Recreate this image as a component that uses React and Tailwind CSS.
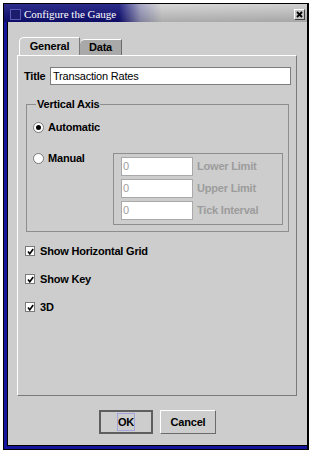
import React from 'react';

const Radio = ({ checked }) => (
  <span className="flex h-[11px] w-[11px] shrink-0 items-center justify-center rounded-full border border-[#7a7a7a] bg-white">
    {checked && <span className="h-[5px] w-[5px] rounded-full bg-black" />}
  </span>
);

const CheckBox = () => (
  <span className="flex h-[10px] w-[10px] shrink-0 items-center justify-center border border-[#7a7a7a] bg-white">
    <svg width="7" height="7" viewBox="0 0 7 7">
      <path d="M1 3.5 L2.8 5.8 L6.2 1" stroke="black" strokeWidth="1.6" fill="none" />
    </svg>
  </span>
);

const LimitRow = ({ label }) => (
  <div className="flex items-center gap-[4px]">
    <div className="flex h-[19px] w-[72px] items-center border border-[#a9a9a9] bg-white pl-[1px] text-[11px] text-[#a0a0a0]">
      0
    </div>
    <span className="text-[11px] font-bold text-[#9c9c9c]">{label}</span>
  </div>
);

const App = () => {
  return (
    <div className="min-h-screen w-full bg-white pl-[3px] pt-[3px] font-['Liberation_Sans',Arial,sans-serif] tracking-[-0.2px]">
      <div className="flex h-[447px] w-[306px] flex-col border border-r-2 border-black">
        {/* Title bar */}
        <div className="flex h-[18px] shrink-0 items-center bg-[linear-gradient(to_bottom,rgba(255,255,255,0.12),rgba(0,0,0,0.18)),linear-gradient(to_right,#10107c_0%,#10107c_38%,#9c9cc0_45%,#d2d2d2_52%,#cacaca_100%)] pl-[6px] pr-[2px] pt-[3px]">
          <span className="h-[11px] w-[11px] border border-[#5a5ab4] bg-[#1c1c6c]" />
          <span className="ml-[3px] font-['Liberation_Serif',serif] text-[11px] leading-none tracking-normal text-white">
            Configure the Gauge
          </span>
          <span className="ml-auto flex h-[11px] w-[11px] items-center justify-center border border-t-white border-l-white border-r-[#404040] border-b-[#404040] bg-[#c4c4c4]">
            <svg width="7" height="7" viewBox="0 0 7 7">
              <path d="M1 1 L6 6 M6 1 L1 6" stroke="black" strokeWidth="1.8" />
            </svg>
          </span>
        </div>

        {/* Body */}
        <div className="flex flex-1 flex-col border-b-[3px] border-l-[3px] border-[#14149c]">
          <div className="flex flex-1 flex-col border-b border-l border-black bg-[#cdcdcd] pl-[9px] pr-[9px] pt-[15px]">
            {/* Tabs */}
            <div className="flex h-[18px] items-end">
              <div className="ml-[2px] flex h-[18px] w-[61px] items-center justify-center rounded-tl-[5px] border-l border-t border-r border-l-white border-t-white border-r-[#7a7a7a] text-[11px] font-bold text-black">
                General
              </div>
              <div className="flex h-[16px] w-[42px] items-center justify-center rounded-tl-[5px] border-t border-r border-t-white border-r-[#6a6a6a] bg-[#a9a9a9] text-[11px] font-bold text-black">
                Data
              </div>
            </div>

            {/* Panel */}
            <div className="flex h-[341px] w-[280px] flex-col border border-l-white border-t-white border-r-[#7a7a7a] border-b-[#7a7a7a] pl-[6px] pr-[5px] pt-[11px]">
              {/* Title */}
              <div className="flex h-[18px] items-center">
                <span className="w-[26px] text-[11px] font-bold text-black">Title</span>
                <div className="flex h-[18px] flex-1 items-center border border-[#7c7c7c] bg-white pl-[2px] text-[11px] text-black">
                  Transaction Rates
                </div>
              </div>

              {/* Vertical Axis */}
              <fieldset className="mx-[2px] mt-[13px] border border-[#8e8e8e] pb-[6px] pl-[6px] pr-[5px]">
                <legend className="ml-[3px] px-[1px] text-[11px] font-bold leading-[13px] text-black">
                  Vertical Axis
                </legend>
                <div className="mt-[9px] flex h-[14px] items-center gap-[4px]">
                  <Radio checked />
                  <span className="text-[11px] font-bold text-black">Automatic</span>
                </div>
                <div className="mt-[17px] flex items-start">
                  <div className="flex h-[14px] items-center gap-[4px]">
                    <Radio />
                    <span className="text-[11px] font-bold text-black">Manual</span>
                  </div>
                  <div className="ml-auto mt-[2px] flex w-[170px] flex-col gap-[3px] border border-[#8e8e8e] pb-[4px] pl-[7px] pt-[3px]">
                    <LimitRow label="Lower Limit" />
                    <LimitRow label="Upper Limit" />
                    <LimitRow label="Tick Interval" />
                  </div>
                </div>
              </fieldset>

              {/* Options */}
              <div className="ml-[1px] mt-[12px] flex flex-col gap-[14px]">
                {['Show Horizontal Grid', 'Show Key', '3D'].map((label) => (
                  <div key={label} className="flex h-[14px] items-center gap-[5px]">
                    <CheckBox />
                    <span className="text-[11px] font-bold text-black">{label}</span>
                  </div>
                ))}
              </div>
            </div>

            {/* Buttons */}
            <div className="mt-[14px] flex justify-center gap-[7px]">
              <button className="flex h-[24px] w-[54px] items-center justify-center border-2 border-[#5e5e5e] bg-[#cdcdcd]">
                <span className="flex h-[18px] w-[18px] items-center justify-center border border-[#a4a4dc] text-[11px] font-bold text-black">
                  OK
                </span>
              </button>
              <button className="flex h-[24px] w-[56px] items-center justify-center border border-l-white border-t-white border-r-[#6a6a6a] border-b-[#6a6a6a] bg-[#cdcdcd] text-[11px] font-bold text-black">
                Cancel
              </button>
            </div>
          </div>
        </div>
      </div>
    </div>
  );
};

export default App;
